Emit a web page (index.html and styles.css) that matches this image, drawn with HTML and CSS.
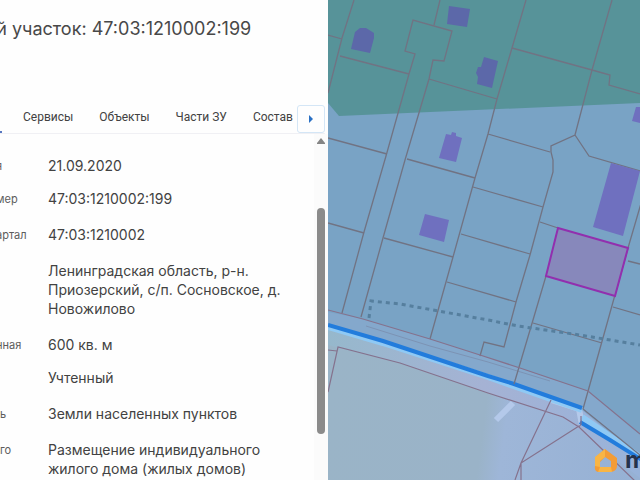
FILE: index.html
```
<!DOCTYPE html>
<html lang="ru">
<head>
<meta charset="utf-8">
<title>Земельный участок</title>
<link rel="stylesheet" href="styles.css">
</head>
<body>
<div class="app">
  <section class="panel">
    <h1 class="title">ый участок: 47:03:1210002:199</h1>
    <nav class="tabs">
      <span class="tab-mark"></span>
      <a class="tab" href="#services">Сервисы</a>
      <a class="tab" href="#objects">Объекты</a>
      <a class="tab" href="#parts">Части ЗУ</a>
      <a class="tab" href="#composition">Состав</a>
      <button class="next" type="button" aria-label="Далее"><svg width="6" height="8" viewBox="0 0 6 8"><path d="M1 0 5 4 1 8Z" fill="#2a70c4"/></svg></button>
    </nav>
    <div class="body">
      <dl class="facts">
        <div class="row compact"><dt>я</dt><dd>21.09.2020</dd></div>
        <div class="row"><dt>мер</dt><dd>47:03:1210002:199</dd></div>
        <div class="row"><dt>артал</dt><dd>47:03:1210002</dd></div>
        <div class="row"><dt></dt><dd>Ленинградская область, р-н. Приозерский, с/п. Сосновское, д. Новожилово</dd></div>
        <div class="row compact"><dt>нная</dt><dd>600 кв. м</dd></div>
        <div class="row"><dt></dt><dd>Учтенный</dd></div>
        <div class="row"><dt class="whole">ь</dt><dd>Земли населенных пунктов</dd></div>
        <div class="row"><dt class="whole">го</dt><dd>Размещение индивидуального жилого дома (жилых домов)</dd></div>
      </dl>
      <div class="scroll">
        <svg width="10" height="7" viewBox="0 0 10 7"><path d="M5 0 9 5V6H1V5Z" fill="#858585"/></svg>
        <span class="thumb"></span>
      </div>
    </div>
  </section>
  <main class="map">
    <svg class="canvas" viewBox="328 0 312 480" preserveAspectRatio="xMinYMin slice" role="img" aria-label="Карта участков">
      <defs>
        <linearGradient id="ground" gradientUnits="userSpaceOnUse" x1="328" x2="640" y1="400" y2="440">
          <stop offset="0" stop-color="#9ab4c7"/><stop offset=".5" stop-color="#9ab3c8"/><stop offset=".57" stop-color="#9eb6d8"/><stop offset="1" stop-color="#96b1d4"/>
        </linearGradient>
        <linearGradient id="verge" x1="0" x2="1" y1="0" y2="0">
          <stop offset="0" stop-color="#96b8cc"/><stop offset=".5" stop-color="#a5b2d4"/><stop offset="1" stop-color="#98b3da"/>
        </linearGradient>
      </defs>
      <path fill="#79a3c5" d="M328 0H640V480H328Z"/>
      <path fill="#579399" d="M328 0H640V103L339 116 328 103Z"/>
      <path fill="url(#ground)" d="M328 340 338 347 400 363 563 410 640 465V480H328Z"/>
      <path fill="url(#verge)" d="M328 326 383 342 488 378 582 410 640 450V478L563 418 488 393 400 363 328 345Z"/>
      <path fill="#84a8cc" d="M328 312 363 319 430 339 480 355 588 391 640 434V458L582 410 488 378 383 342 328 326Z"/>
      <path fill="none" stroke="#7c93b4" d="M366 326 430 346 488 362 550 381"/>
      <path fill="none" stroke="#b4c9ea" stroke-width="6" d="M551 400 579 409 582 425M513 403 496 420"/>
      <path fill="none" stroke="#8fc9f4" stroke-width="6" d="M328 327 383 343 488 377 582 410M582 417 640 457"/>
      <path fill="none" stroke="#227cdc" stroke-width="4" d="M328 325 383 341 488 376 514 384 582 408M580 422 610 440 642 460"/>
      <g fill="none" stroke="#717383" stroke-width="1.3">
        <path d="M354 0 342 38 328 93M328 35 342 39M340 56 409 74M440 0 434 25M328 138 387 154M407 159 475 178M328 223 364 233M384 238 453 257M473 187 543 207M461 234 530 254M447 282 516 302"/>
        <path d="M342 313 364 232 386 156 409 74 415 54 405 51 413 20 452 31 444 61 433 60 429 79 405 160 383 238 361 317"/>
        <path d="M429 79 497 99M526 0 512 48 497 99 488 134 475 178 453 257 430 339M512 48 592 70 610 75 609 85 640 94"/>
        <path d="M612 0 592 70 575 135 551 146 551 152 553 160 553 172 543 207 530 255 516 302 504 347 484 342 480 356M488 134 550 152M575 135 589 156 640 171"/>
        <path d="M540 222 558 228M642 200 628 248 608 320 583 409M628 261 640 264M613 307 640 315M546 276 533 320 514 384M533 323 602 343M583 409 640 455"/>
      </g>
      <g fill="none" stroke="#85728d" stroke-width="1.2">
        <path d="M328 310 363 319 430 339 480 355 520 368 588 391 640 434M328 392 338 347 400 363 488 393 563 417 579 427 605 452 636 482M328 350 337 351M551 400 521 463 515 480M579 426 521 463V480M581 416V424L579 427"/>
      </g>
      <path fill="none" stroke="#567f9e" stroke-width="3" stroke-dasharray="4 4" d="M369 318 371 301 400 304 488 320 518 326 580 335 640 345"/>
      <g fill="#5c68a9">
        <path d="M355 32 360 28 366 28 374 33 374 38 370 53 351 49Z"/>
        <path d="M449 6 470 9 467 27 447 24Z"/>
        <path d="M484 57 498 61 492 88 477 84 478 77 476 73 478 67 481 67Z"/>
      </g>
      <g fill="#6f70bf">
        <path d="M446 134 451 135 452 132 456 133 456 136 462 138 456 162 439 158Z"/>
        <path d="M425 214 449 220 444 242 419 235Z"/>
        <path d="M611 163 640 171 623 236 593 227Z"/>
        <path d="M636 107H640V123L632 121Z"/>
      </g>
      <path fill="#8788bb" stroke="#922fae" stroke-width="2" d="M558 228 628 248 615 296 546 276Z"/>
      <path fill="#f39c36" fill-rule="evenodd" d="M605 449 617 458V466Q617 471 611 472H598Q594 471 595 466V458ZM605 457 600 462V467H611V461Z"/>
      <path fill="#f8b545" d="M605 449 595 457V466L600 467V461L605 457ZM600 467H611L612 472H598Z"/>
      <text class="brand" x="625" y="468">m</text>
    </svg>
  </main>
</div>
</body>
</html>
```
FILE: styles.css
```
* { box-sizing: border-box; }
body { margin: 0; font-family: Inter, "Liberation Sans", sans-serif; color: #424242; background: #fefefe; }
.app { display: flex; height: 100vh; overflow: hidden; }
.panel { flex: 0 0 328px; display: flex; flex-direction: column; overflow: hidden; background: #fefefe; }
.title { margin: 17px 0 0 -17px; font-size: 18px; line-height: 24px; font-weight: 400; color: #484848; white-space: nowrap; }
.tabs { display: flex; align-items: center; flex: none; height: 30px; margin: 63px 3px 0 0; border-bottom: 1px solid #f0f0f4; font-family: Roboto, sans-serif; font-size: 12px; }
.tab-mark { align-self: flex-end; width: 2px; height: 2px; margin-right: 21px; background: #5877c0; }
.tab { margin-right: 26px; color: #424242; text-decoration: none; white-space: nowrap; line-height: 16px; padding-bottom: 4px; }
.tab:last-of-type { margin-right: 0; }
.next { display: flex; align-items: center; justify-content: center; flex: none; width: 28px; height: 28px; margin-left: auto; padding: 0; border: 1px solid #d4e6f6; border-radius: 3px; background: #fefefe; }
.body { display: flex; flex: 1; min-height: 0; }
.facts { flex: 1; margin: 0; padding-top: 22px; overflow: hidden; }
.row { display: flex; padding-bottom: 17px; line-height: 19px; }
.compact { padding-bottom: 14px; }
dt { flex: 0 0 52px; margin-left: -4px; padding-top: 1px; font-size: 11px; line-height: 18px; color: #5c5c5c; }
.whole { flex-basis: 48px; margin-left: 0; }
dd { margin: 0; flex: 1; font-size: 14px; }
.scroll { display: flex; flex-direction: column; align-items: center; flex: none; width: 14px; padding-top: 4px; background: #fbfbfb; }
.thumb { width: 8px; height: 66%; margin-top: 63px; border-radius: 4px; background: #8b8b8b; }
.map { flex: 1; min-width: 0; background: #79a3c5; }
.canvas { display: block; width: 100%; height: 100%; }
.brand { font-family: Inter, sans-serif; font-size: 24px; font-weight: 700; fill: #24334c; }
```
